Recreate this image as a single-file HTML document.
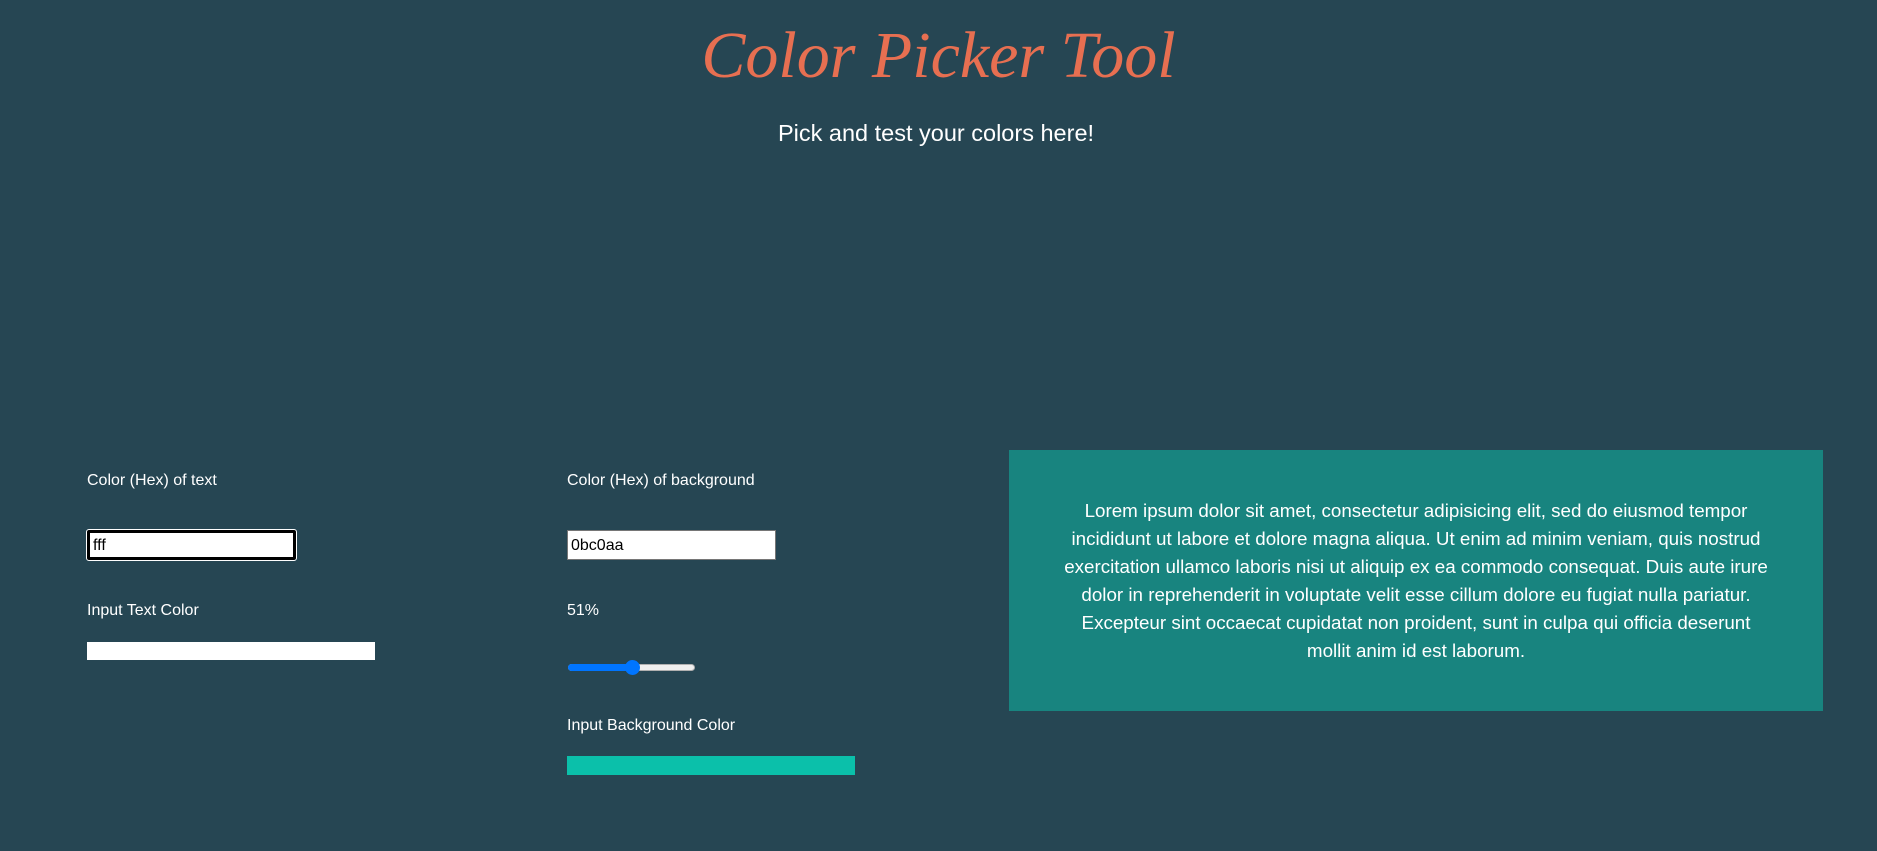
<!DOCTYPE html>
<html><head><meta charset="utf-8"><style>
html,body{margin:0;padding:0;width:1877px;height:851px;background:#264653;overflow:hidden;font-family:"Liberation Sans",sans-serif;color:#fff;}
.a{position:absolute;}
h1{position:absolute;left:0;width:1877px;top:6px;margin:0;text-align:center;font-family:"Liberation Serif",serif;font-style:italic;font-weight:normal;font-size:66px;color:#e76f51;line-height:100px;}
.sub{left:0;width:1872px;text-align:center;top:118px;font-size:23.5px;line-height:30px;}
.lbl{font-size:16px;line-height:20px;}
input{position:absolute;box-sizing:border-box;font-family:"Liberation Sans",sans-serif;font-size:16px;padding:1px 3px 0;background:#fff;color:#000;}
.p{left:1009px;top:450px;width:814px;height:261px;background:#18847f;}
.pt{position:absolute;left:1058px;width:716px;top:497px;text-align:center;font-size:18.8px;line-height:28px;}
</style></head><body>
<h1>Color Picker Tool</h1>
<div class="a sub">Pick and test your colors here!</div>
<div class="a lbl" style="left:87px;top:471px">Color (Hex) of text</div>
<input style="left:87px;top:530px;width:209px;height:30px;border:3px solid #000;outline:1px solid #fff;border-radius:2px" value="fff">
<div class="a lbl" style="left:87px;top:601px">Input Text Color</div>
<div class="a" style="left:87px;top:642px;width:288px;height:18px;background:#fff"></div>
<div class="a lbl" style="left:567px;top:471px">Color (Hex) of background</div>
<input style="left:567px;top:530px;width:209px;height:30px;border:1px solid #767676" value="0bc0aa">
<div class="a lbl" style="left:567px;top:601px">51%</div>
<div class="a" style="left:568px;top:664px;width:127px;height:7px;background:#efefef;border:1px solid #b0b0b0;border-radius:4px;box-sizing:border-box"></div>
<div class="a" style="left:568px;top:664px;width:64px;height:7px;background:#0075ff;border-radius:4px"></div>
<div class="a" style="left:625px;top:660px;width:15px;height:15px;background:#0075ff;border-radius:50%"></div>
<div class="a lbl" style="left:567px;top:716px">Input Background Color</div>
<div class="a" style="left:567px;top:756px;width:288px;height:19px;background:#0bc0aa"></div>
<div class="a p"></div>
<div class="pt">Lorem ipsum dolor sit amet, consectetur adipisicing elit, sed do eiusmod tempor incididunt ut labore et dolore magna aliqua. Ut enim ad minim veniam, quis nostrud exercitation ullamco laboris nisi ut aliquip ex ea commodo consequat. Duis aute irure dolor in reprehenderit in voluptate velit esse cillum dolore eu fugiat nulla pariatur. Excepteur sint occaecat cupidatat non proident, sunt in culpa qui officia deserunt mollit anim id est laborum.</div>
</body></html>
